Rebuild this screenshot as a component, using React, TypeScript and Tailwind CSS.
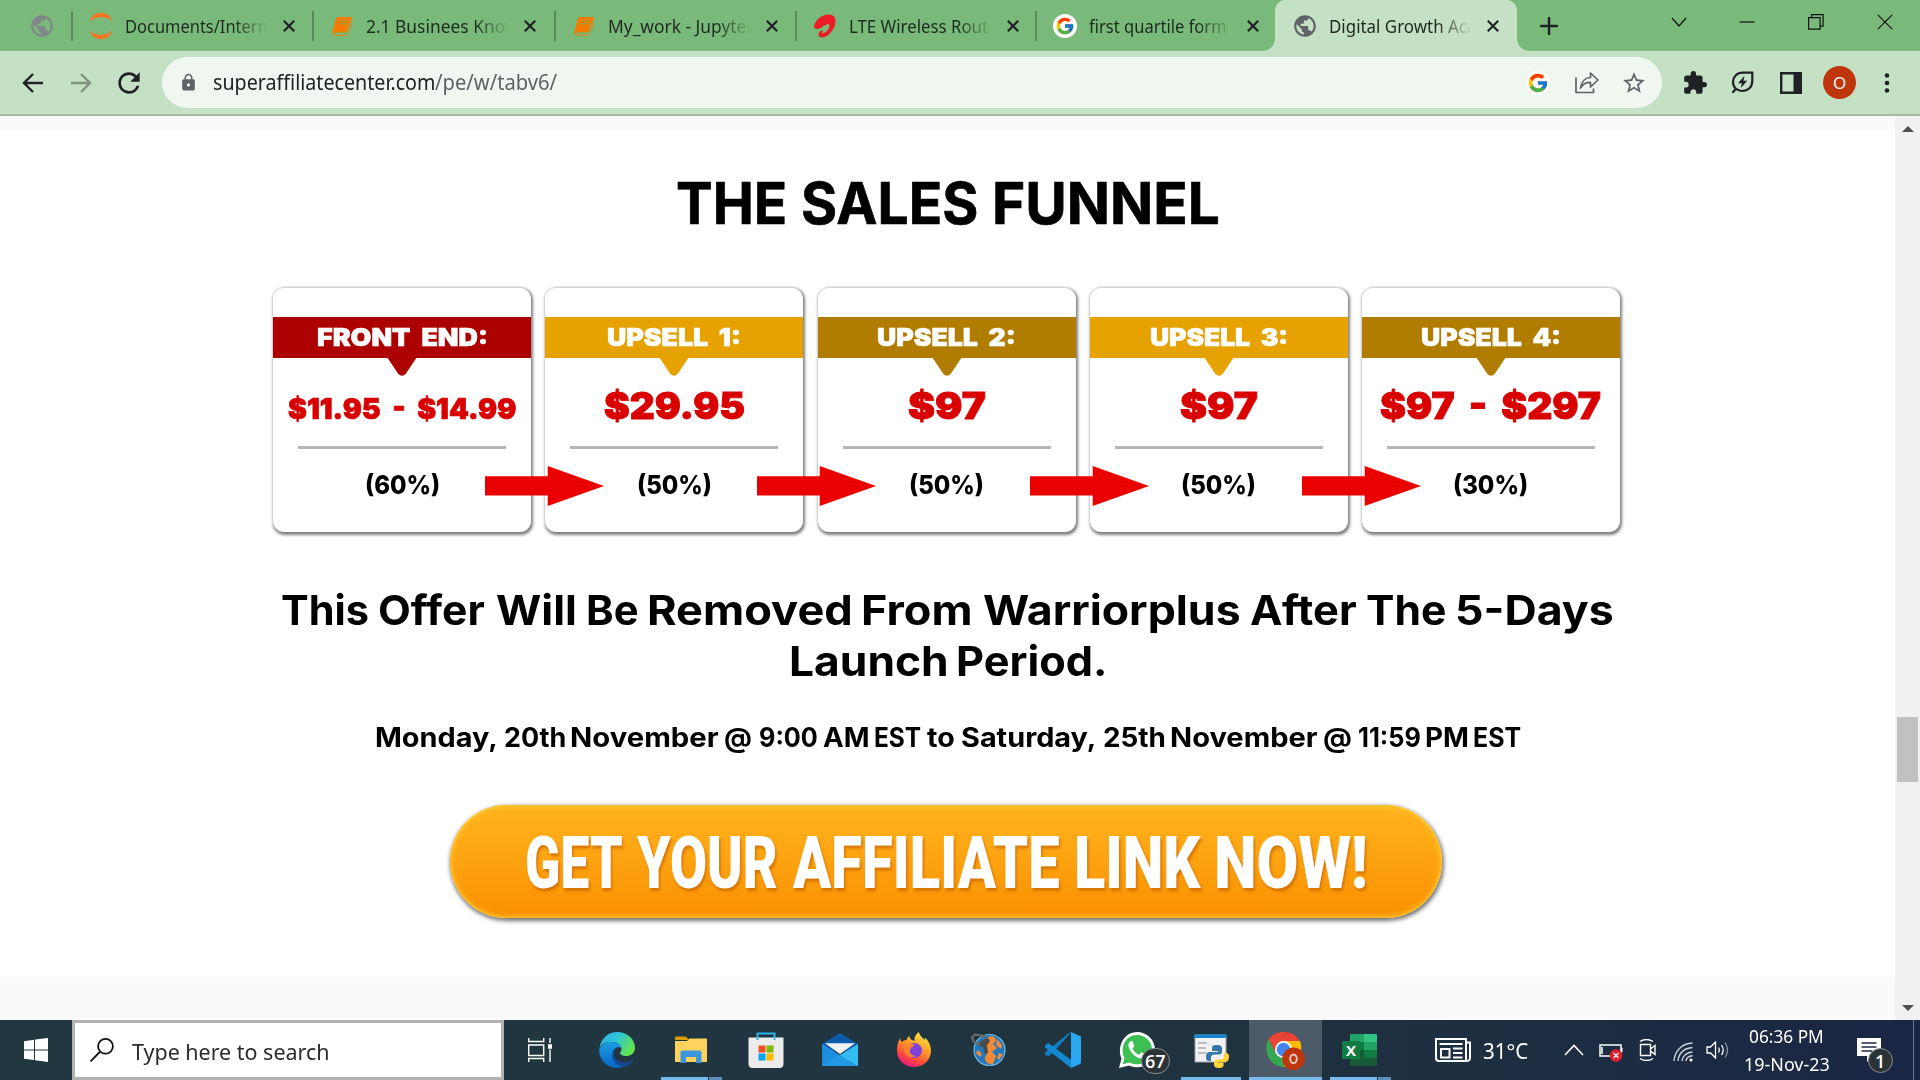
import React, { useLayoutEffect, useRef, useState } from "react";
import { FcGoogle } from "react-icons/fc";
import { MdPublic, MdLock, MdExtension, MdStarBorder, MdRefresh } from "react-icons/md";

/* Single-line text condensed or widened to an exact width. */
function Fit({ w, className = "", gap = 0, children }: { w: number; className?: string; gap?: number; children: React.ReactNode }) {
  const ref = useRef<HTMLSpanElement>(null);
  const [scale, setScale] = useState(1);
  useLayoutEffect(() => {
    const measure = () => {
      if (ref.current && ref.current.offsetWidth) setScale(w / ref.current.offsetWidth);
    };
    measure();
    document.fonts?.ready.then(measure);
  }, [w]);
  return (
    <span className={"block shrink-0 " + className} style={{ width: w, marginLeft: gap || undefined }}>
      <span ref={ref} className="inline-block origin-left whitespace-nowrap align-top" style={{ transform: `scaleX(${scale})` }}>
        {children}
      </span>
    </span>
  );
}

/* A line of words, each given as [text, left, right]. */
type Word = [string, number, number];
function Line({ words, className = "" }: { words: Word[]; className?: string }) {
  return (
    <div className={"flex justify-center " + className}>
      {words.map(([t, l, r], i) => (
        <Fit key={i} w={r - l} gap={i ? l - words[i - 1][2] : 0}>{t}</Fit>
      ))}
    </div>
  );
}

const titleWords: Word[] = [["THE", 676, 787], ["SALES", 801, 978], ["FUNNEL", 992, 1220]];
const offerWords: Word[] = [
  ["This", 281, 369], ["Offer", 378, 485], ["Will", 496, 577], ["Be", 586, 639], ["Removed", 647, 853],
  ["From", 861, 973], ["Warriorplus", 983, 1241], ["After", 1250, 1357], ["The", 1366, 1446], ["5-Days", 1455, 1614],
];
const dateWords: Word[] = [
  ["Monday,", 374, 497], ["20th", 503, 565], ["November", 569, 718], ["@", 723, 751], ["9:00", 758, 817],
  ["AM", 822, 868], ["EST", 873, 920], ["to", 926, 954], ["Saturday,", 960, 1096], ["25th", 1102, 1165],
  ["November", 1169, 1317], ["@", 1322, 1351], ["11:59", 1357, 1420], ["PM", 1424, 1468], ["EST", 1472, 1520],
];
const ctaWords: Word[] = [["GET", 526, 624], ["YOUR", 638, 779], ["AFFILIATE", 794, 1061], ["LINK", 1075, 1201], ["NOW!", 1215, 1369]];

/* ---------- favicons ---------- */
const Jupyter = () => (
  <svg className="h-7 w-6" viewBox="0 0 24 28" fill="#f37726">
    <path d="M.8 9.500C2 4 6.500 .8 12 .8S22 4 23.200 9.500C20.500 6.500 16.500 5.200 12 5.200S3.500 6.500.8 9.500z" />
    <path d="M.8 18.500C2 24 6.500 27.200 12 27.200S22 24 23.200 18.500C20.500 21.500 16.500 22.800 12 22.800S3.500 21.500.8 18.500z" />
  </svg>
);
const Book = () => (
  <svg className="h-5 w-5" viewBox="0 0 20 20">
    <path d="M6 1h12.200c1.400 0 1.900.9 1.500 2.200l-3.600 11.600c-.4 1.300-1 1.900-2.400 1.900H3.500c-.9 0-1.300.5-1 1.200.2.6.8.8 1.500.8h10.800c.8 0 1.200-.3 1.400-1l3.300-11 .4.500c.3.500.2 1 0 1.600L16.500 17.500c-.4 1.300-1.300 2.200-2.800 2.200H3.500C1.600 19.700-.1 17.700.4 15.800L3.800 3c.4-1.300 1-2 2.200-2z" fill="#f57c00" />
    <path d="M7.500 5h8M6.800 7.800h8M2.300 16.900h12.200l3.200-10" stroke="#8bab52" strokeWidth="1" fill="none" />
  </svg>
);
const Airtel = () => (
  <svg className="h-6 w-6" viewBox="0 0 24 24">
    <path d="M1 12.500C2 6 9 .5 15.500.5c6.500 0 8 5 6.500 10.200C20.500 16.500 15 22.800 9.500 23.500 5 23.800 4.500 19.500 7.500 17c1-.8 2-.8 2.500 0 .3.800-1 1.600-.6 2.600 3.600-.8 7-4.800 7.100-7.600 0-2.500-2.500-2-5-.6C8.500 13 6.500 15 3.800 15 2 15 .8 14 1 12.500z" fill="#ed1c24" />
  </svg>
);

const CloseX = () => (
  <svg className="h-3 w-3" viewBox="0 0 12 12" stroke="#202124" strokeWidth="2.200">
    <path d="M.8.800 11.200 11.200M11.200.8.8 11.200" />
  </svg>
);

function Tab({ cell, icon, title, w, active }: { cell: string; icon: React.ReactNode; title: string; w: number; active?: boolean }) {
  return (
    <div className={"relative flex h-[51px] shrink-0 items-center " + cell}>
      {active && (
        <>
          <span className="absolute -left-3 bottom-0 h-3 w-3 bg-[radial-gradient(circle_at_0_0,#79ba7a_11.500px,#c5e1c5_12px)]" />
          <span className="absolute -right-3 bottom-0 h-3 w-3 bg-[radial-gradient(circle_at_100%_0,#79ba7a_11.500px,#c5e1c5_12px)]" />
        </>
      )}
      <div className="flex w-6 shrink-0 justify-center">{icon}</div>
      <div className="ml-[12px] w-[141px] shrink-0 overflow-hidden [mask-image:linear-gradient(to_right,#000_108px,transparent_143px)]">
        <Fit w={w} className="font-['Noto_Sans','Open_Sans',sans-serif] text-[17.500px] leading-[26px] text-[#1d2a1f]">{title}</Fit>
      </div>
      <div className="ml-[17px]"><CloseX /></div>
    </div>
  );
}

const Sep = () => <div className="mt-[11px] h-[30px] w-0.5 shrink-0 bg-[#5a8a5c]" />;

function TabStrip() {
  return (
    <div className="flex h-[51px] shrink-0 bg-[#79ba7a]">
      <div className="flex w-[71px] items-center justify-center pl-[13px]">
        <MdPublic className="h-[26px] w-[26px] text-[#80868b]" />
      </div>
      <Sep />
      <Tab cell="w-[239px] pl-[16px]" icon={<Jupyter />} title="Documents/Intern" w={143} />
      <Sep />
      <Tab cell="w-[240px] pl-[16px]" icon={<Book />} title="2.1 Businees Know" w={152} />
      <Sep />
      <Tab cell="w-[239px] pl-[16px]" icon={<Book />} title="My_work - Jupyter" w={146} />
      <Sep />
      <Tab cell="w-[238px] pl-[16px]" icon={<Airtel />} title="LTE Wireless Route" w={149} />
      <Sep />
      <Tab
        cell="w-[238px] pl-[16px]"
        icon={<span className="flex h-6 w-6 items-center justify-center rounded-full bg-white"><FcGoogle className="h-5 w-5" /></span>}
        title="first quartile form"
        w={138}
      />
      <Tab cell="w-[242px] rounded-t-[10px] bg-[#c5e1c5] pl-[18px]" icon={<MdPublic className="h-[26px] w-[26px] shrink-0 text-[#5f6368]" />} title="Digital Growth Aca" w={147} active />
      <svg className="ml-[23px] mt-[17px] h-[18px] w-[18px]" viewBox="0 0 18 18" stroke="#202124" strokeWidth="2.400" strokeLinecap="round">
        <path d="M9 1v16M1 9h16" />
      </svg>
      <div className="ml-[113px] flex h-[43px] items-center">
        <svg className="h-4 w-4" viewBox="0 0 16 16" fill="none" stroke="#111" strokeWidth="1.200"><path d="M1 4l7 8 7-8" /></svg>
        <svg className="ml-[52px] h-4 w-4" viewBox="0 0 16 16" fill="none" stroke="#111" strokeWidth="1.200"><path d="M.5 8h15" /></svg>
        <svg className="ml-[53px] h-4 w-4" viewBox="0 0 16 16" fill="none" stroke="#111" strokeWidth="1.200"><path d="M.6 3.600h11.500v11.500H.6zM3.600 3.600V.6h11.500v11.500h-3" /></svg>
        <svg className="ml-[53px] h-4 w-4" viewBox="0 0 16 16" fill="none" stroke="#111" strokeWidth="1.200"><path d="M.8.8l14.400 14.400M15.200.8.8 15.200" /></svg>
      </div>
    </div>
  );
}

function Toolbar() {
  return (
    <div className="flex h-[65px] shrink-0 items-center border-b-2 border-[#a3b8a5] bg-[#c5e1c5] pl-[22px]">
      <svg className="h-[22px] w-[22px]" viewBox="0 0 22 22" fill="none" stroke="#202124" strokeWidth="2.400"><path d="M21 11H2.500M11 2l-9 9 9 9" /></svg>
      <svg className="ml-[26px] h-[22px] w-[22px]" viewBox="0 0 22 22" fill="none" stroke="#7f9280" strokeWidth="2.400"><path d="M1 11h18.500M11 2l9 9-9 9" /></svg>
      <MdRefresh className="ml-[21px] h-8 w-8 text-[#202124]" />
      <div className="ml-[17px] flex h-[51px] w-[1500px] shrink-0 items-center rounded-full bg-[#f0f7f0] pl-[17px]">
        <MdLock className="h-[19px] w-[19px] text-[#5f6368]" />
        <Fit w={222} className="-mt-0.5 ml-[15px] font-['Noto_Sans','Open_Sans',sans-serif] text-[21px] leading-[30px] text-[#202124]">superaffiliatecenter.com</Fit>
        <Fit w={122} className="-mt-0.5 font-['Noto_Sans','Open_Sans',sans-serif] text-[21px] leading-[30px] text-[#5f6368]">/pe/w/tabv6/</Fit>
        <span className="ml-[969px] flex h-6 w-6 items-center justify-center rounded-full bg-white"><FcGoogle className="h-[22px] w-[22px]" /></span>
        <svg className="ml-[25px] h-[23px] w-6" viewBox="0 0 24 23" fill="none" stroke="#5f6368" strokeWidth="1.700">
          <path d="M1 6.500V21.500h17.500V17.500M5.500 17C6.500 10.500 10.500 6.500 15.500 6.500V2L23 9l-7.500 7v-4.500C11 11.200 8 13 5.500 17z" strokeLinejoin="round" />
        </svg>
        <MdStarBorder className="ml-[22px] h-[26px] w-[26px] text-[#5f6368]" />
      </div>
      <MdExtension className="ml-[20px] h-[26px] w-[26px] shrink-0 text-[#202124]" />
      <svg className="ml-[23px] h-[23px] w-[23px] shrink-0" viewBox="0 0 23 23">
        <path d="M21.300 1.700H12C5.500 1.700 2 6 2 11c0 5.500 4 9 9 9 6 0 10.300-3.800 10.300-10zM5 17.500 1.500 21.800" fill="none" stroke="#202124" strokeWidth="2.200" />
        <path d="M13.500 4.800 7 12.200h3.800L9.800 17l6.500-7.200h-3.900z" fill="#202124" />
      </svg>
      <svg className="ml-[26px] h-[22px] w-[22px] shrink-0" viewBox="0 0 22 22"><path d="M1.200 1.200h19.600v19.600H1.200z" fill="none" stroke="#202124" strokeWidth="2.400" /><path d="M13.500 1H21v20h-7.500z" fill="#202124" /></svg>
      <span className="ml-[21px] flex h-[33px] w-[33px] shrink-0 items-center justify-center rounded-full bg-[#bf360c] font-['Open_Sans',sans-serif] text-[17px] text-white"><Fit w={13}>O</Fit></span>
      <svg className="ml-[28px] h-5 w-1.5 shrink-0" viewBox="0 0 6 20" fill="#202124"><circle cx="3" cy="2.500" r="2.300" /><circle cx="3" cy="10" r="2.300" /><circle cx="3" cy="17.500" r="2.300" /></svg>
    </div>
  );
}

/* ---------- page ---------- */
type Step = { label: string; lw: number; price: string; pw: number; small?: boolean; pct: string; band: string; tip: string };
const steps: Step[] = [
  { label: "FRONT END:", lw: 171, price: "$11.95 - $14.99", pw: 228, small: true, pct: "(60%)", band: "bg-[#ad0000]", tip: "text-[#ad0000]" },
  { label: "UPSELL 1:", lw: 134, price: "$29.95", pw: 141, pct: "(50%)", band: "bg-[#e6a200]", tip: "text-[#e6a200]" },
  { label: "UPSELL 2:", lw: 139, price: "$97", pw: 78, pct: "(50%)", band: "bg-[#b07d00]", tip: "text-[#b07d00]" },
  { label: "UPSELL 3:", lw: 138, price: "$97", pw: 78, pct: "(50%)", band: "bg-[#e6a200]", tip: "text-[#e6a200]" },
  { label: "UPSELL 4:", lw: 140, price: "$97 - $297", pw: 221, pct: "(30%)", band: "bg-[#b07d00]", tip: "text-[#b07d00]" },
];

function Card({ s, last }: { s: Step; last: boolean }) {
  return (
    <div className="relative flex h-[244px] w-[258px] shrink-0 flex-col items-center rounded-[11px] bg-white pt-[29px] shadow-[1px_1.500px_3px_1px_rgba(0,0,0,0.5)]">
      <div className={"flex h-[41px] w-full items-center justify-center " + s.band}>
        <Fit w={s.lw} className="-mt-px font-['Inter',sans-serif] text-[24.500px] font-black leading-[40px] text-white [-webkit-text-stroke:0.600px_#fff] [word-spacing:5px]">{s.label}</Fit>
      </div>
      <svg className={"-mt-px h-[19px] w-[30px] " + s.tip} viewBox="0 0 30 19" fill="currentColor"><path d="M0 0h30L19 16.500Q15 21 11 16.500z" /></svg>
      <div className={"flex h-[58px] items-center " + (s.small ? "pt-[8px]" : "pt-[2px]")}>
        <Fit
          w={s.pw}
          className={"font-['Inter',sans-serif] font-black leading-[40px] text-[#d90000] [word-spacing:6px] " + (s.small ? "text-[29px] [-webkit-text-stroke:0.700px_#d90000]" : "text-[37px] [-webkit-text-stroke:0.900px_#d90000]")}
        >
          {s.price}
        </Fit>
      </div>
      <div className="mt-[12px] h-[3px] w-[208px] bg-[#b5b5b5]" />
      <Fit w={75} className="mt-[16px] font-['Inter',sans-serif] text-[25.500px] font-extrabold leading-[40px] text-black">{s.pct}</Fit>
      {!last && (
        <svg className="absolute left-[212px] top-[178px] z-10 h-10 w-[119px]" viewBox="0 0 119 40" fill="#eb0000">
          <path d="M0 10.300h62.700V0L119 20 62.700 40V29.500H0z" />
        </svg>
      )}
    </div>
  );
}

function Page() {
  return (
    <div className="flex h-[904px] shrink-0">
      <div className="flex w-[1895px] flex-col bg-[#fafafa] pt-3.5">
        <div className="flex h-[847px] flex-col items-center bg-white font-['Inter',sans-serif] text-black">
          <Line words={titleWords} className="mt-[43px] text-[58px] font-bold leading-[60px] [-webkit-text-stroke:0.700px_#000]" />
          <div className="mr-[2px] mt-[55px] flex gap-[14.200px]">
            {steps.map((s, i) => <Card key={i} s={s} last={i === steps.length - 1} />)}
          </div>
          <Line words={offerWords} className="mt-[53px] text-[41px] font-bold leading-[51px]" />
          <Line words={[["Launch", 789, 949], ["Period.", 956, 1107]]} className="text-[41px] font-bold leading-[51px]" />
          <Line words={dateWords} className="mt-[30px] text-[26.500px] font-bold leading-[40px]" />
          <div className="mr-[3px] mt-[48px] flex h-[113px] w-[992px] items-center justify-center rounded-full bg-linear-to-b from-[#ffb41c] to-[#fa9000] shadow-[1px_2px_4px_1px_rgba(0,0,0,0.550),inset_0_0_5px_1px_#ffd23c]">
            <Line words={ctaWords} className="pt-[4px] font-['Roboto',sans-serif] text-[72px] font-black leading-[110px] text-white [text-shadow:2px_3px_3px_rgba(190,90,0,0.600)]" />
          </div>
        </div>
      </div>
      <div className="flex w-[25px] flex-col items-center bg-[#f1f1f1]">
        <svg className="mt-[10px] h-[6px] w-3" viewBox="0 0 12 6" fill="#505050"><path d="M0 6 6 0l6 6z" /></svg>
        <div className="mt-[585px] h-[65px] w-[21px] bg-[#c1c1c1]" />
        <svg className="mt-[223px] h-[6px] w-3" viewBox="0 0 12 6" fill="#505050"><path d="M0 0l6 6 6-6z" /></svg>
      </div>
    </div>
  );
}

/* ---------- taskbar ---------- */
const Edge = () => (
  <svg className="h-9 w-9" viewBox="0 0 36 36">
    <defs>
      <linearGradient id="eg" x1="0" y1="0" x2="1" y2=".5"><stop offset="0" stopColor="#2ea9e8" /><stop offset=".5" stopColor="#2fc5d5" /><stop offset="1" stopColor="#62e34f" /></linearGradient>
      <linearGradient id="eb" x1="0" y1="0" x2="0" y2="1"><stop offset="0" stopColor="#1b9de2" /><stop offset="1" stopColor="#0b63c5" /></linearGradient>
    </defs>
    <path d="M.5 16C2 6.500 9 0 18 0c10.500 0 18 7.500 18 15.500 0 5-3.500 8.500-8.500 8.500-4 0-6.500-1.500-6.500-3 0-1 1.500-1.500 1.500-4.500 0-3-4-6.500-9-6.500C7 10 2.500 12 .5 16z" fill="url(#eg)" />
    <path d="M.3 17C2.500 12 8 9.800 13.500 10c5 .2 9 3.500 9 6.500-1.500-2.500-8.500-2-8.500 5C14 29 20 34 26 34c-2.500 1.300-5 2-8 2C7 36-.5 27 .3 17z" fill="url(#eb)" />
    <path d="M17 16.500c-5 6 0 14 8.500 14 4 0 6.500-2 8-3 1 0 .6 1-.2 2-2.500 3-5 4.500-7.300 5C19 35.500 12.500 29 13 22c.2-3 2-5 4-5.500z" fill="#124a94" />
  </svg>
);
const Folder = () => (
  <svg className="h-9 w-9" viewBox="0 0 36 36">
    <path d="M2 5.500C2 5 2.500 4.500 3 4.500h10l3 3.500h-14z" fill="#dd9b05" /><path d="M2 9h12l2.500-2.500H33c.6 0 1 .4 1 1V29c0 .6-.4 1-1 1H3c-.6 0-1-.4-1-1z" fill="#ffd25e" />
    <path d="M7.500 31V20.500c0-1.500.8-2 2-2H26c1.500 0 2.500.8 2.500 2V31h-5.500v-6H13v6z" fill="#3a96dd" />
  </svg>
);
const Store = () => (
  <svg className="h-9 w-9" viewBox="0 0 36 36">
    <path d="M9.500 8V1.500h17V8" fill="none" stroke="#2bb3ee" strokeWidth="2" />
    <path d="M.5 5.500h35V32c0 2.500-1.500 4-4 4h-27c-2.500 0-4-1.500-4-4z" fill="#ececec" /><path d="M9.500 5.500V8M26.500 5.500V8" stroke="#2bb3ee" strokeWidth="2" />
    <path d="M10.500 13.500h7v7h-7z" fill="#f25022" /><path d="M18.500 13.500h7v7h-7z" fill="#7fba00" /><path d="M10.500 21.500h7v7h-7z" fill="#00a4ef" /><path d="M18.500 21.500h7v7h-7z" fill="#ffb900" />
  </svg>
);
const Mail = () => (
  <svg className="h-9 w-9" viewBox="0 0 36 36">
    <path d="M0 12 18 1l18 11v7H0z" fill="#0d5cab" />
    <path d="M0 12l18 11.500L36 12v22H0z" fill="#1e8fe0" /><path d="M36 12 0 34h36z" fill="#33bdf2" /><path d="M0 12 36 34H0z" fill="#1d8edf" opacity=".75" />
    <path d="M3 11.300h30L18 22z" fill="#f1f1f1" />
  </svg>
);
const Firefox = () => (
  <svg className="h-9 w-9" viewBox="0 0 36 36">
    <defs><linearGradient id="ff" x1=".8" y1="0" x2=".3" y2="1"><stop offset="0" stopColor="#fff04a" /><stop offset=".4" stopColor="#ffa126" /><stop offset=".75" stopColor="#ff4b3b" /><stop offset="1" stopColor="#e31587" /></linearGradient></defs>
    <path d="M4.500 6c0 2 .5 3 1.500 4C7.500 8.500 9 8 10.500 8c.5-2 2-3.500 3-4 0 3 2 4 5 5C18 5 20 2 23 0c.5 4 4 6 6 8 0-1 0-2-.3-2.500C32 8 35 13 35 18.500 35 28 27.500 35 18 35S1 28 1 19C1 14 2 9 4.500 6z" fill="url(#ff)" />
    <circle cx="18.500" cy="18.500" r="7.500" fill="#8040dc" /><path d="M8 13c3-2 8-1 10.500 0-1 2-3.500 2-4 4-2 4 2 7 6 7-5 3-12-1-12.500-6z" fill="#ff8a27" opacity=".9" />
  </svg>
);
const PaintGlobe = () => (
  <svg className="h-9 w-9" viewBox="0 0 36 36">
    <circle cx="19.500" cy="18" r="15.500" fill="#2379bd" stroke="#72b9df" strokeWidth="1.200" />
    <path d="M18 5c4-2 8 0 8 4l-3 3 4 4-5 4 4 4-3 8c-5 1-9-3-8-7l3-5-3-5z M27 7l5 6-1 4-5-4zM29 21l4 1-4 6-2-2zM8 18l4 4-2 3-4-4z" fill="#f28a38" />
    <path d="M2 5.500l3-3 9 1.500 2 3-2 4-6 1-4-2z" fill="none" stroke="#6a6a6a" strokeWidth="2.200" />
    <path d="M11 9l7-3 2 3-3 4 1 8-3 1-2-7-4-1z" fill="#4b4b4b" />
  </svg>
);
const VSCode = () => (
  <svg className="h-9 w-9" viewBox="0 0 36 36">
    <path d="M26.500 0 8 20.500 3 24.500 0 22.500v-2L24 1z" fill="#0f7dc8" /><path d="M0 13.500 3.500 11 26 28v8L0 15.500z" fill="#1588d3" /><path d="M26 0l9 4c.6.300 1 1 1 1.700v24.600c0 .700-.4 1.400-1 1.700l-9 4z" fill="#2aa7f2" />
  </svg>
);
const WhatsApp = () => (
  <span className="relative">
    <svg className="h-9 w-9" viewBox="0 0 36 36">
      <path d="M0 36l2.500-9.500C-2.500 14.500 5 0 18 0c10 0 18 8 18 17.800C36 31 22 39 10 33.500z" fill="#fff" /><path d="M3.700 32.300l1.700-6.600C.5 15 7 3 18 3c8.500 0 15 6.800 15 14.800 0 11.500-12 18-22.500 12.700z" fill="#3cc051" />
      <path d="M12.500 9c-1 0-3.500 2-3 5.200C10.500 19.500 16.500 26 22 26.500c3 .2 5-1.800 5-4l-4.500-2.300-2.500 2.500c-3-1-5.500-3.500-6.500-6l1.700-2.500L13.500 9z" fill="#fff" />
    </svg>
    <span className="absolute left-[22px] top-[16px] flex h-[26px] w-[29px] items-center justify-center rounded-full border border-[#868b8d] bg-[#2c3337] font-['Open_Sans',sans-serif] text-[18px] font-semibold leading-none text-white">67</span>
  </span>
);
const PythonDoc = () => (
  <svg className="h-9 w-9" viewBox="0 0 36 36">
    <path d="M2 3h31v27H2z" fill="#f1f1f1" stroke="#a4a4a4" /><path d="M1.500 2.500h32V6h-32z" fill="#1584d2" /><path d="M5 11h9M5 16h8M5 21h8" stroke="#a8adb1" strokeWidth="1.500" />
    <path d="M24 13c-4 0-5 1-5 3v3h6v1h-8c-3 0-4 2-4 5s1 4 3 4h2v-3c0-2 1-3.500 3.500-3.500H26c2 0 3-1 3-3V16c0-2-2-3-5-3z" fill="#3774a8" />
    <path d="M25.500 36c4 0 5-1 5-3v-2.500h-5.500V30h7c2.500 0 4-2 4-5s-1-4-3-4h-2v3c0 2-1 3.500-3 3.500H24c-2 0-3 1-3 3V33c0 2 2 3 4.500 3z" fill="#ffd43b" />
  </svg>
);
const Chrome = () => (
  <svg className="h-10 w-10" viewBox="0 0 40 40">
    <path d="M18.500 2C12 2 6.500 5 3.500 9.500L11 24l7.500-13h16C31.500 5 25.500 2 18.500 2z" fill="#e94335" />
    <path d="M3.500 9.500C-2 19 3 36 18.500 37l7-13.500L11 24z" fill="#34a853" /><path d="M35 11H18.500l7.500 13-7.500 13C33 37 39 22 35 11z" fill="#fbbc04" />
    <circle cx="18.500" cy="19.500" r="8.500" fill="#fff" /><circle cx="18.500" cy="19.500" r="6.700" fill="#4285f4" />
    <circle cx="28.500" cy="28.800" r="11.300" fill="#bf360c" />
    <ellipse cx="28.500" cy="28.800" rx="3.300" ry="4.300" fill="none" stroke="#f0cfc4" strokeWidth="1.900" />
  </svg>
);
const Excel = () => (
  <div className="relative h-8 w-[35px]">
    <div className="ml-2 grid h-8 w-[27px] grid-cols-2 overflow-hidden rounded-[1px]">
      <i className="bg-[#21a366]" /><i className="bg-[#33c481]" /><i className="bg-[#107c41]" /><i className="bg-[#21a366]" /><i className="bg-[#185c37]" /><i className="bg-[#107c41]" /><i className="bg-[#185c37]" /><i className="bg-[#185c37]" />
    </div>
    <span className="absolute left-0 top-[7px] flex h-[18px] w-[18px] items-center justify-center rounded-[1px] bg-[#107c41] font-['Open_Sans',sans-serif] text-[15px] font-bold leading-none text-white">X</span>
  </div>
);

function TaskItem({ children, mark }: { children: React.ReactNode; mark?: "group" | "open" | "active" }) {
  return (
    <div className="relative flex h-[60px] w-[74.250px] shrink-0 items-center justify-center">
      {mark === "active" && <span className="absolute inset-x-px inset-y-0 bg-[#4d5a67]" />}
      <span className="relative">{children}</span>
      {mark === "group" && <span className="absolute bottom-0 left-[7px] flex h-[3px] w-[61px]"><i className="w-[47px] bg-[#76b9ed]" /><i className="ml-px flex-1 bg-[#5c8fba]" /></span>}
      {mark === "open" && <span className="absolute bottom-0 left-[7px] h-[3px] w-[60px] bg-[#76b9ed]" />}
      {mark === "active" && <span className="absolute inset-x-px bottom-0 h-[3px] bg-[#76b9ed]" />}
    </div>
  );
}

function Taskbar() {
  return (
    <div className="flex h-[60px] shrink-0 items-center bg-linear-to-r from-[#213840] via-[#20343f] via-60% to-[#1a2644] font-['Noto_Sans','Open_Sans',sans-serif] text-white">
      <div className="flex w-[72px] shrink-0 justify-center">
        <svg className="h-6 w-6" viewBox="0 0 24 24" fill="#fff"><path d="M0 3.200 10 1.800v9.600H0zM11 1.600 24 0v11.400H11zM0 12.400h10v9.700L0 20.700zM11 12.400h13V24l-13-1.700z" /></svg>
      </div>
      <div className="flex h-[60px] w-[432px] shrink-0 items-center border-[3px] border-[#b1b1b1] bg-white pl-[15px]">
        <svg className="h-6 w-6" viewBox="0 0 24 24" fill="none" stroke="#111" strokeWidth="1.800"><circle cx="15.500" cy="8.300" r="7.400" /><path d="M10.200 13.500.6 23.300" /></svg>
        <Fit w={198} className="ml-[18px] pt-0.5 text-[22px] leading-[30px] text-[#2b2b2b]">Type here to search</Fit>
      </div>
      <div className="flex w-[76px] shrink-0 justify-center pr-1">
        <svg className="h-6 w-6" viewBox="0 0 24 24" fill="none" stroke="#fff" strokeWidth="1.400"><path d="M.7 0v3.500h15V0M.7 7h15v10.500h-15zM.7 24v-3.500h15V24M22 0v5M22 11.500V24" /><path d="M20.700 7h2.600v3h-2.600z" fill="#fff" /></svg>
      </div>
      <TaskItem><Edge /></TaskItem>
      <TaskItem mark="group"><Folder /></TaskItem>
      <TaskItem><Store /></TaskItem>
      <TaskItem><Mail /></TaskItem>
      <TaskItem><Firefox /></TaskItem>
      <TaskItem><PaintGlobe /></TaskItem>
      <TaskItem><VSCode /></TaskItem>
      <TaskItem><WhatsApp /></TaskItem>
      <TaskItem mark="open"><PythonDoc /></TaskItem>
      <TaskItem mark="active"><Chrome /></TaskItem>
      <TaskItem mark="group"><Excel /></TaskItem>
      <svg className="ml-[38px] h-6 w-9 shrink-0" viewBox="0 0 36 24" fill="none" stroke="#fff" strokeWidth="2">
        <path d="M1 1h30v22H4c-2 0-3-1-3-3zM31 4.500h4V20c0 2-1.500 3-4 3M4.500 6h23" /><path d="M6 11h8.500v8.500H6zM18 10.500h9.500M18 15h9.500M18 19.500h9.500" />
      </svg>
      <Fit w={45} className="ml-[12px] pt-0.5 text-[21px] leading-[30px]">31°C</Fit>
      <svg className="ml-[36px] h-3 w-5 shrink-0" viewBox="0 0 20 12" fill="none" stroke="#fff" strokeWidth="1.600"><path d="M1 11 10 1.500 19 11" /></svg>
      <svg className="ml-[15px] mt-1 h-5 w-6 shrink-0" viewBox="0 0 24 20">
        <path d="M1 3h21v11H1zM3 5v7" fill="none" stroke="#fff" strokeWidth="1.500" /><path d="M22 6h1.500v4H22z" fill="#fff" /><circle cx="17" cy="13.500" r="6.300" fill="#dd1f2b" /><path d="M14.500 11l5 5m0-5-5 5" stroke="#fff" strokeWidth="1.200" />
      </svg>
      <svg className="ml-[16px] h-[22px] w-[18px] shrink-0" viewBox="0 0 18 22" fill="none" stroke="#fff" strokeWidth="1.400"><path d="M1.500 5.500h10v11h-10zM11.500 10l4.500-3.500v9L11.500 12M1 2.500Q7.500-1.500 14 2.500M1 19.500q6.500 4 13 0" /></svg>
      <svg className="ml-[16px] mt-1 h-5 w-5 shrink-0" viewBox="0 0 20 20" fill="none" stroke="#cfd4dc" strokeWidth="1.400"><path d="M1 19C1.500 9 9 1.500 19.500 1M5 19C5.500 11.500 11 6 19.500 5.500M9 19c.5-5 4.500-8.800 10.500-9M13 19c.3-2.800 2.700-5 6.500-5.200" /><circle cx="18" cy="18" r="1.300" fill="#fff" stroke="#fff" strokeWidth=".5" /></svg>
      <svg className="ml-[13px] h-[18px] w-[23px] shrink-0" viewBox="0 0 23 18" fill="none" stroke="#fff" strokeWidth="1.300"><path d="M1 6h3.500L9.500 1v16l-5-5H1zM12.500 6.500q1.500 2.500 0 5M15.500 4q3.500 5 0 10" /><path d="M19 1.500q5 7.500 0 15" stroke="#8891a3" /></svg>
      <div className="ml-[15px] flex w-[86px] shrink-0 flex-col items-center gap-0.5">
        <Fit w={75} className="text-[17.500px] leading-[26px]">06:36 PM</Fit>
        <Fit w={86} className="text-[17.500px] leading-[26px]">19-Nov-23</Fit>
      </div>
      <div className="relative ml-[27px] shrink-0">
        <svg className="h-6 w-6" viewBox="0 0 24 24"><path d="M0 0h24v18h-9l-5 6v-6H0z" fill="#fff" /><path d="M4.500 5h15M4.500 9h15M4.500 13h11" stroke="#1b2844" strokeWidth="1.400" /></svg>
        <span className="absolute left-[11px] top-[10px] flex h-[25px] w-[25px] items-center justify-center rounded-full border border-[#868b8d] bg-[#2c3337] font-['Open_Sans',sans-serif] text-[18px] font-semibold leading-none">1</span>
      </div>
      <div className="ml-auto mr-[6px] h-[60px] w-px bg-[#6d7688]" />
    </div>
  );
}

export default function App() {
  return (
    <div className="flex h-[1080px] w-[1920px] flex-col overflow-hidden bg-white">
      <TabStrip />
      <Toolbar />
      <Page />
      <Taskbar />
    </div>
  );
}
